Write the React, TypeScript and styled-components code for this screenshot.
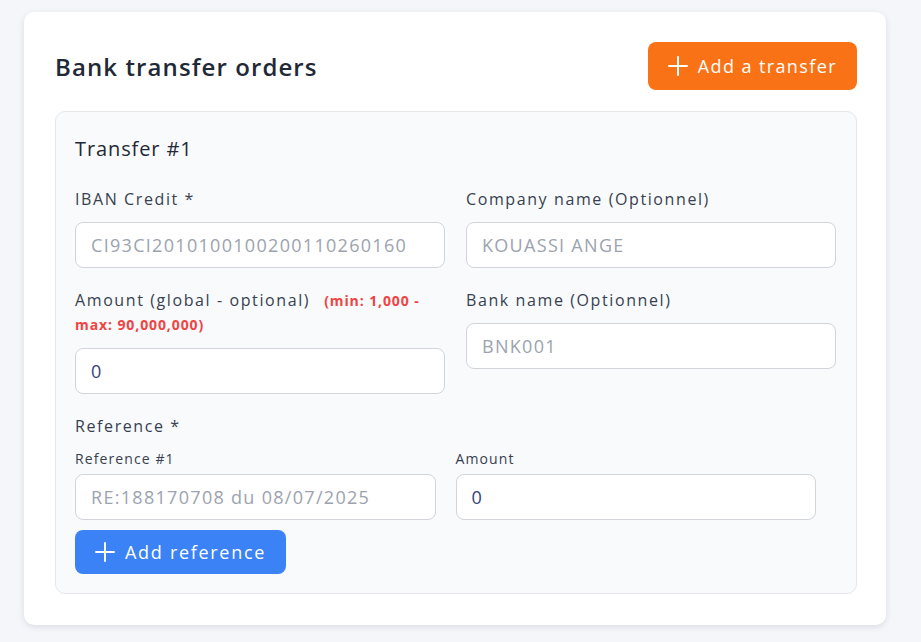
import React from "react";
import styled, { createGlobalStyle } from "styled-components";

const Global = createGlobalStyle`
  * { box-sizing: border-box; }
  html, body { margin: 0; padding: 0; background: #f5f6fa; }
  body { font-family: "Open Sans", "Liberation Sans", sans-serif; }
`;

const Page = styled.div`
  padding: 12px 35px 17px 24px;
  min-height: 642px;
`;

const Card = styled.section`
  background: #ffffff;
  border-radius: 10px;
  box-shadow: 0 2px 6px rgba(30, 40, 70, 0.12);
  padding: 30px 29px 31px 31px;
`;

const Header = styled.div`
  display: flex;
  align-items: center;
  justify-content: space-between;
  margin-bottom: 21px;
`;

const Title = styled.h2`
  margin: 0;
  font-size: 24px;
  font-weight: 600;
  letter-spacing: 1.1px;
  color: #1f2937;
`;

const Button = styled.button<{ $tone: "orange" | "blue"; $h: number }>`
  display: inline-flex;
  align-items: center;
  gap: 10px;
  height: ${(p) => p.$h}px;
  padding: 0 20px 0 20px;
  border: none;
  border-radius: 8px;
  background: ${(p) => (p.$tone === "orange" ? "#f97316" : "#3b82f6")};
  color: #ffffff;
  font-family: inherit;
  font-size: 18px;
  font-weight: 400;
  letter-spacing: ${(p) => (p.$tone === "orange" ? 1.4 : 1.7)}px;
  cursor: pointer;
  svg { flex: none; }
`;

const Panel = styled.div`
  background: #f9fafb;
  border: 1px solid #e5e7eb;
  border-radius: 10px;
  padding: 20px 20px 19px 19px;
`;

const PanelTitle = styled.h3`
  margin: 0 0 21px;
  font-size: 20px;
  font-weight: 500;
  letter-spacing: 0.9px;
  color: #1f2937;
  line-height: 34px;
`;

const Grid = styled.div`
  display: grid;
  grid-template-columns: 1fr 1fr;
  column-gap: 21px;
  row-gap: 20px;
  align-items: start;
`;

const Field = styled.div`
  display: flex;
  flex-direction: column;
`;

const Label = styled.label<{ $small?: boolean; $gap?: number }>`
  font-size: ${(p) => (p.$small ? 14 : 16)}px;
  font-weight: 500;
  letter-spacing: ${(p) => (p.$small ? 1.1 : 1.6)}px;
  color: #374151;
  line-height: ${(p) => (p.$small ? 20 : 24)}px;
  margin-bottom: ${(p) => p.$gap ?? (p.$small ? 5 : 11)}px;
`;

const Note = styled.span`
  font-size: 14px;
  font-weight: 700;
  letter-spacing: 0.9px;
  color: #ef4444;
  margin-left: 14px;
  line-height: 20px;
`;

const Input = styled.input`
  height: 46px;
  width: 100%;
  border: 1px solid #d1d5db;
  border-radius: 8px;
  background: #ffffff;
  padding: 0 15px;
  font-family: inherit;
  font-size: 18px;
  letter-spacing: 1.3px;
  color: #34437a;
  outline: none;
  &::placeholder { color: #9ca3af; }
`;

const RefSection = styled.div`
  margin-top: 20px;
`;

const RefGrid = styled.div`
  display: grid;
  grid-template-columns: 1fr 1fr 0;
  column-gap: 20px;
  margin-bottom: 10px;
`;

const PlusIcon = () => (
  <svg width="20" height="20" viewBox="0 0 20 20" fill="none" stroke="currentColor" strokeWidth="2" strokeLinecap="round">
    <path d="M10 1v18M1 10h18" />
  </svg>
);

export default function App() {
  return (
    <>
      <Global />
      <Page>
        <Card>
          <Header>
            <Title>Bank transfer orders</Title>
            <Button $tone="orange" $h={48}>
              <PlusIcon />
              Add a transfer
            </Button>
          </Header>
          <Panel>
            <PanelTitle>Transfer #1</PanelTitle>
            <Grid>
              <Field>
                <Label>IBAN Credit *</Label>
                <Input placeholder="CI93CI2010100100200110260160" />
              </Field>
              <Field>
                <Label>Company name (Optionnel)</Label>
                <Input placeholder="KOUASSI ANGE" />
              </Field>
              <Field>
                <Label $gap={12}>
                  Amount (global - optional)
                  <Note>(min: 1,000 - max: 90,000,000)</Note>
                </Label>
                <Input defaultValue="0" />
              </Field>
              <Field>
                <Label>Bank name (Optionnel)</Label>
                <Input placeholder="BNK001" />
              </Field>
            </Grid>
            <RefSection>
              <Label as="div">Reference *</Label>
              <RefGrid>
                <Field>
                  <Label $small>Reference #1</Label>
                  <Input placeholder="RE:188170708 du 08/07/2025" />
                </Field>
                <Field>
                  <Label $small>Amount</Label>
                  <Input defaultValue="0" />
                </Field>
                <div />
              </RefGrid>
              <Button $tone="blue" $h={44}>
                <PlusIcon />
                Add reference
              </Button>
            </RefSection>
          </Panel>
        </Card>
      </Page>
    </>
  );
}
